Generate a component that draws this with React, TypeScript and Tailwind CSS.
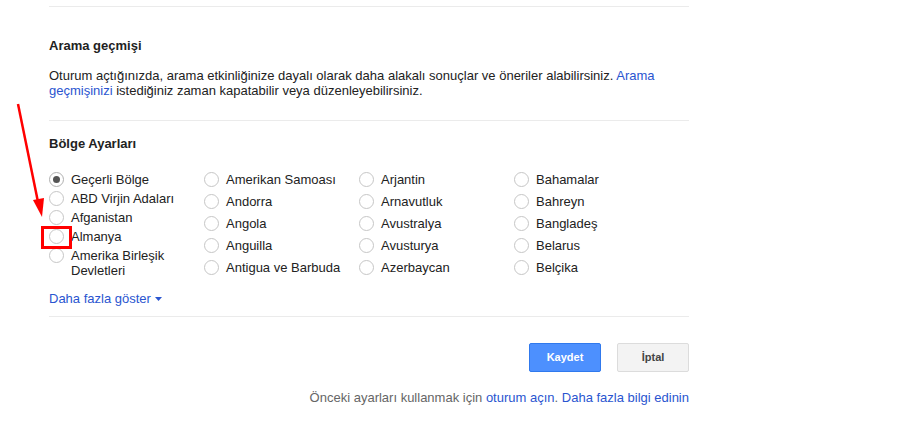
import React from "react";

const col1 = ["Geçerli Bölge", "ABD Virjin Adaları", "Afganistan", "Almanya", "Amerika Birleşik Devletleri"];
const col2 = ["Amerikan Samoası", "Andorra", "Angola", "Anguilla", "Antigua ve Barbuda"];
const col3 = ["Arjantin", "Arnavutluk", "Avustralya", "Avusturya", "Azerbaycan"];
const col4 = ["Bahamalar", "Bahreyn", "Bangladeş", "Belarus", "Belçika"];

function Radio({ checked }: { checked?: boolean }) {
  return (
    <span
      className={
        "flex h-[15px] w-[15px] shrink-0 items-center justify-center rounded-full border bg-white " +
        (checked ? "border-[#b0b0b0]" : "border-[#c6c6c6]")
      }
    >
      {checked && <span className="h-[7px] w-[7px] rounded-full bg-[#555]" />}
    </span>
  );
}

function Column({ items, rowH, first }: { items: string[]; rowH: string; first?: boolean }) {
  return (
    <div className="flex w-[155px] flex-col pt-[2px]">
      {items.map((t, i) => (
        <label key={t} className={"flex items-start gap-[7px] " + rowH}>
          <span className="pt-[1px]">
            <Radio checked={first && i === 0} />
          </span>
          <span className="leading-[15px] pt-[1px]">{t}</span>
        </label>
      ))}
    </div>
  );
}

export default function App() {
  return (
    <div
      className="relative h-[430px] w-[915px] overflow-hidden bg-white text-[13px] text-[#222]"
      style={{ fontFamily: '"Liberation Sans", Arial, sans-serif' }}
    >
      <div className="ml-[49px] w-[640px] pt-[6px]">
        <div className="border-t border-[#ebebeb]" />

        <h2 className="mt-[31px] font-bold leading-[16px]">Arama geçmişi</h2>
        <p className="mt-[14px] leading-[15px]">
          Oturum açtığınızda, arama etkinliğinize dayalı olarak daha alakalı sonuçlar ve öneriler alabilirsiniz.{" "}
          <a className="text-[#2a55d0]">Arama geçmişinizi</a> istediğiniz zaman kapatabilir veya düzenleyebilirsiniz.
        </p>

        <div className="mt-[22px] border-t border-[#ebebeb]" />

        <h2 className="mt-[15px] font-bold leading-[16px]">Bölge Ayarları</h2>

        <div className="mt-[17px] flex">
          <Column items={col1} rowH="min-h-[19px]" first />
          <Column items={col2} rowH="h-[22px]" />
          <Column items={col3} rowH="h-[22px]" />
          <Column items={col4} rowH="h-[22px]" />
        </div>

        <a className="mt-[10px] flex items-center gap-[4px] leading-[16px] text-[#2a55d0]">
          Daha fazla göster
          <svg width="7" height="4" viewBox="0 0 7 4">
            <path d="M0 0h7L3.5 4z" fill="#2a55d0" />
          </svg>
        </a>

        <div className="mt-[9px] border-t border-[#ebebeb]" />

        <div className="mt-[26px] flex justify-end gap-[16px]">
          <button className="h-[29px] w-[72px] rounded-[2px] border border-[#3079ed] bg-[#4d90fe] text-[11px] font-bold text-white">
            Kaydet
          </button>
          <button className="h-[29px] w-[72px] rounded-[2px] border border-[#dcdcdc] bg-[#f3f3f3] text-[11px] font-bold text-[#444]">
            İptal
          </button>
        </div>

        <p className="mt-[18px] text-right leading-[16px] text-[#666]">
          Önceki ayarları kullanmak için <a className="text-[#2a55d0]">oturum açın</a>.{" "}
          <a className="text-[#2a55d0]">Daha fazla bilgi edinin</a>
        </p>
      </div>

      {/* annotation */}
      <svg className="pointer-events-none absolute left-0 top-0" width="915" height="430">
        <line x1="18" y1="104" x2="38" y2="202" stroke="#ff0000" strokeWidth="2.5" />
        <polygon points="33,200 44,198 42,217" fill="#ff0000" />
      </svg>
      <div className="pointer-events-none absolute left-[41px] top-[226px] h-[23px] w-[31px] border-[3px] border-[#ff0000]" />
    </div>
  );
}
